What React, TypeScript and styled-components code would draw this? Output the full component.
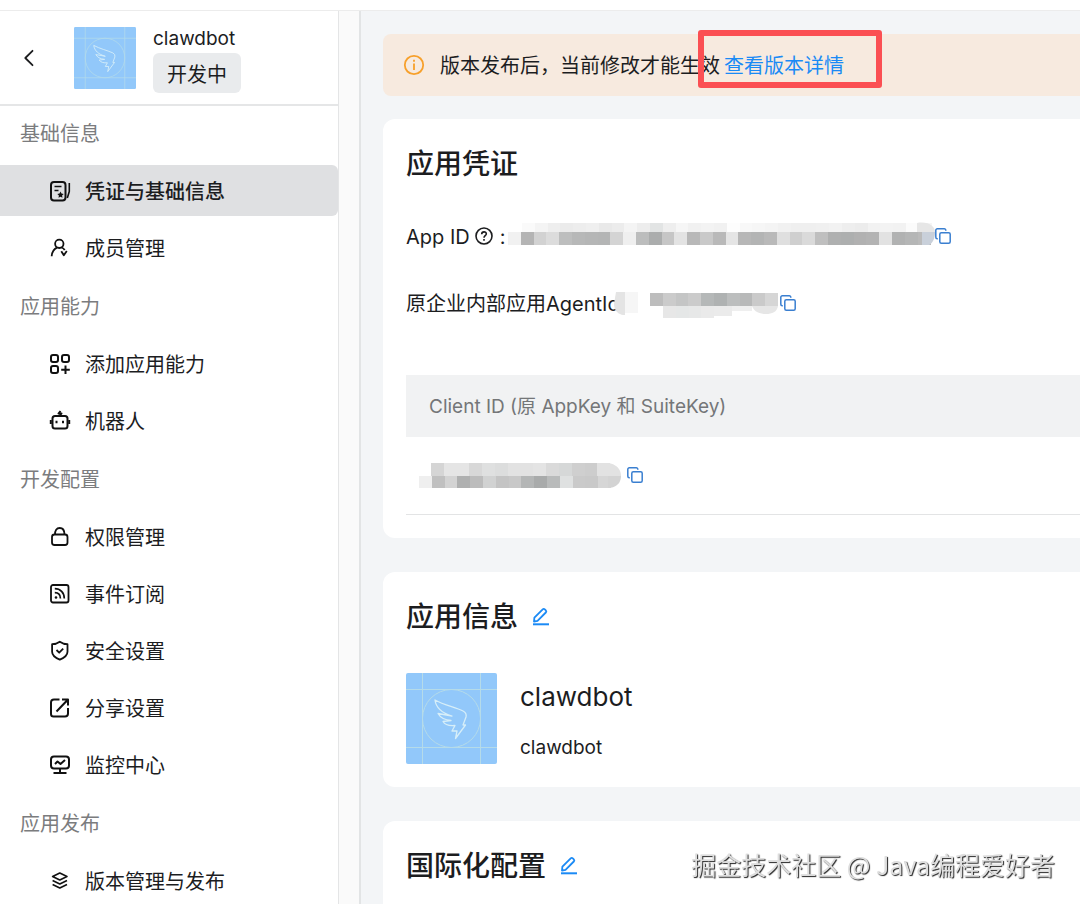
import React from "react";
import styled, { createGlobalStyle } from "styled-components";

const GlobalStyle = createGlobalStyle`
  *, *::before, *::after { box-sizing: border-box; }
  body {
    margin: 0;
    color: #1c1d1f;
    background: #fff;
    font-family: Inter, "Noto Sans CJK SC", sans-serif;
    font-size: 20px;
    line-height: 30px;
  }
  h1, h2, p, ul { margin: 0; padding: 0; font-weight: 400; }
  button { font: inherit; color: inherit; padding: 0; border: 0; background: none; cursor: pointer; }
  svg { display: block; flex: none; }
`;

const Page = styled.div`
  display: flex;
  flex-direction: column;
  height: 100vh;
  overflow: hidden;
`;

const TopBar = styled.header`
  flex: none;
  height: 11px;
  border-bottom: 1px solid #ececec;
`;

const Body = styled.div`
  flex: 1;
  display: flex;
  min-height: 0;
`;

const Sidebar = styled.aside`
  flex: none;
  width: 339px;
  overflow-y: auto;
  scrollbar-width: none;
  border-right: 1px solid #e4e5e6;
`;

const Gutter = styled.div`
  flex: none;
  width: 22px;
  background: #fafafa;
  border-right: 2px solid #e2e4e5;
`;

const AppHeader = styled.div`
  display: flex;
  align-items: center;
  height: 95px;
  padding-left: 18px;
  border-bottom: 2px solid #e5e6e7;
`;

const BackButton = styled.button`
  display: flex;
  margin-right: 34px;
`;

const AppTitle = styled.div`
  display: flex;
  flex-direction: column;
  align-items: flex-start;
  margin-left: 17px;
  padding-top: 2px;
`;

const AppName = styled.h1`
  font-size: 19px;
  line-height: 28px;
`;

const StatusTag = styled.span`
  padding: 7px 14px 3px;
  border-radius: 6px;
  background: #e9ebed;
`;

const NavGroup = styled.section`
  display: flex;
  flex-direction: column;
  gap: 6px;
  padding-bottom: 6px;
`;

const NavLabel = styled.h2`
  padding: 4px 0 0 20px;
  font-size: 20px;
  line-height: 49px;
  color: #7b7c7e;
`;

const NavList = styled.ul`
  display: flex;
  flex-direction: column;
  gap: 6px;
  list-style: none;
`;

const NavLink = styled.a<{ $active?: boolean }>`
  display: flex;
  align-items: center;
  gap: 14px;
  height: 51px;
  padding-left: 49px;
  border-radius: 0 6px 6px 0;
  color: #1c1d1f;
  text-decoration: none;
  font-weight: ${(p) => (p.$active ? 500 : 400)};
  background: ${(p) => (p.$active ? "#dfe0e2" : "transparent")};
`;

const NavText = styled.span`
  padding-top: 2px;
`;

const Main = styled.main`
  flex: 1;
  min-width: 0;
  display: flex;
  flex-direction: column;
  padding: 23px 0 0 22px;
  overflow-y: auto;
  scrollbar-width: none;
  background: #f3f5f7;
`;

const Banner = styled.div`
  flex: none;
  display: flex;
  align-items: center;
  height: 62px;
  margin-bottom: 23px;
  padding-left: 20px;
  border-radius: 8px 0 0 8px;
  background: #f7eadf;
`;

const BannerText = styled.p`
  margin-left: 15px;
  padding-top: 2px;
  white-space: nowrap;
`;

const Highlighted = styled.span`
  position: relative;
  display: inline-block;
  margin-left: 4px;
`;

const HighlightFrame = styled.span`
  position: absolute;
  inset: -21px -38px -7px -26px;
  border: 6px solid #fb4f53;
  border-radius: 3px;
  pointer-events: none;
`;

const TextLink = styled.a`
  color: #1b8af5;
  text-decoration: none;
`;

const Card = styled.section`
  flex: none;
  margin-bottom: 34px;
  padding: 24px 0 23px 23px;
  border-radius: 12px 0 0 12px;
  background: #fff;
`;

const CardHead = styled.div`
  display: flex;
  align-items: center;
  gap: 13px;
  margin-bottom: 35px;
`;

const CardTitle = styled.h2`
  font-size: 28px;
  line-height: 42px;
  font-weight: 500;
`;

const IconButton = styled.button<{ $tone?: string }>`
  display: flex;
  color: ${(p) => p.$tone ?? "#3a7fd0"};
`;

const Fields = styled.div`
  display: flex;
  flex-direction: column;
  gap: 35px;
  margin-bottom: 56px;
`;

const Field = styled.div`
  display: flex;
  align-items: center;
  height: 32px;
`;

const FieldLabel = styled.span`
  padding-top: 2px;
`;

const HelpButton = styled.button`
  display: flex;
  margin: 0 7px 0 5px;
`;

const Redaction = styled.span<{ $before?: number; $after?: number }>`
  margin-left: ${(p) => p.$before ?? 0}px;
  margin-right: ${(p) => p.$after ?? 0}px;
`;

const KeyTable = styled.table`
  width: 100%;
  border-collapse: collapse;
`;

const HeadCell = styled.th`
  height: 62px;
  padding: 2px 23px 0;
  text-align: left;
  font-size: 19px;
  font-weight: 400;
  color: #747678;
  background: #f1f2f3;
`;

const KeyCell = styled.td`
  height: 77px;
  padding: 0 13px;
  border-bottom: 1px solid #e3e4e5;
`;

const KeyValue = styled.div`
  display: flex;
  align-items: center;
`;

const Profile = styled.div`
  display: flex;
  align-items: center;
  gap: 23px;
`;

const ProfileText = styled.div`
  display: flex;
  flex-direction: column;
  gap: 16px;
  padding-top: 2px;
`;

const ProfileName = styled.p`
  font-size: 26px;
  line-height: 42px;
`;

const ProfileNote = styled.p`
  font-size: 19px;
  line-height: 28px;
`;

const Watermark = styled.p`
  position: fixed;
  right: 25px;
  bottom: 22px;
  font-family: "Noto Sans CJK SC", sans-serif;
  font-size: 25px;
  line-height: 36px;
  white-space: nowrap;
  color: #dedede;
  text-shadow: 1px 1px 1px #222;
  pointer-events: none;
`;

function Avatar({ size }: { size: number }) {
  return (
    <svg width={size} height={size} viewBox="0 0 91 91" fill="none" role="img" aria-label="clawdbot">
      <rect width="91" height="91" rx="2" fill="#92c8fa" />
      <g stroke="#b5dbe9" strokeWidth="1">
        <path d="M16.5 0V91M74.5 0V91M0 16.5H91M0 74.5H91" />
        <circle cx="45.5" cy="45.5" r="29" />
      </g>
      <path
        d="M29 27C38 32 48 34 57 38Q61 40 60 44L57 52H59.5L49.5 65.5L51 58H46L49 52.500C44 53 39 52 37 48.500L45 47.500C38 47 34 44 32 40.500L46 43C36 40 30 35 29 27Z"
        stroke="#d6eef8"
        strokeWidth="1.300"
        strokeLinejoin="round"
      />
    </svg>
  );
}

function NavIcon({ children, width = 1.8 }: { children: React.ReactNode; width?: number }) {
  return (
    <svg width="22" height="22" viewBox="0 0 22 22" fill="none" stroke="#111" strokeWidth={width} strokeLinejoin="round" aria-hidden="true">
      {children}
    </svg>
  );
}

const icons = {
  credential: (
    <NavIcon width={2}>
      <rect x="2" y="2" width="14.500" height="18.500" rx="3" />
      <path d="M20.300 3v8.500l-2 6.500" strokeWidth="1.600" />
      <path d="M5.500 6.500h7M5.500 10.500h4" strokeWidth="1.700" />
      <path d="M11.500 11.500l1 2.100 2.200.3-1.600 1.600.4 2.300-2-1.100-2 1.100.4-2.300-1.600-1.600 2.200-.3z" fill="#111" stroke="none" />
    </NavIcon>
  ),
  member: (
    <NavIcon>
      <circle cx="10.300" cy="6.800" r="4.200" />
      <path d="M2.700 19.200C2.900 15.500 4.500 12.300 8 10.600M12.500 10.500q2.300.7 3.200 2.600M12.300 14.300l2.500 4 3-4.300" />
    </NavIcon>
  ),
  addAbility: (
    <NavIcon width={2}>
      <rect x="2" y="2" width="7" height="7" rx="2" />
      <rect x="13" y="2" width="7" height="7" rx="2" />
      <rect x="2" y="13" width="7" height="7" rx="2" />
      <path d="M16.500 12.500v8.500M12.200 16.700h8.600" />
    </NavIcon>
  ),
  robot: (
    <NavIcon width={2}>
      <rect x="3.500" y="6" width="15" height="12.500" rx="2.500" />
      <path d="M1.800 10v4M20.200 10v4M11.500 1l-2 2.500h3l-2 2.500" />
      <path d="M7.500 10.800v2.400M14 10.800v2.400" />
    </NavIcon>
  ),
  lock: (
    <NavIcon>
      <rect x="3" y="8.500" width="15.500" height="10.500" rx="2.500" />
      <path d="M6 8.500C6 4.500 7.500 2 10.700 2S15.500 4.500 15.500 8.500" />
    </NavIcon>
  ),
  feed: (
    <NavIcon>
      <rect x="2" y="2" width="17.500" height="17.500" rx="2" />
      <path d="M5.800 5.700c5.500 0 9.500 4 9.500 9.800M5.800 9.700c3.400 0 5.600 2.300 5.600 5.800" strokeWidth="1.700" />
      <circle cx="7" cy="14.500" r="1.300" fill="#111" stroke="none" />
    </NavIcon>
  ),
  shield: (
    <NavIcon>
      <path d="M10.800 1.700q3.500 2.500 7.700 2.500v7.500c0 3.800-3 6-7.700 8-4.700-2-7.700-4.200-7.700-8V4.200q4.200 0 7.700-2.500z" />
      <path d="M7.500 10l2.700 2.700 4-4" />
    </NavIcon>
  ),
  share: (
    <NavIcon width={2}>
      <path d="M10.500 2.500H5a3 3 0 0 0-3 3V17a2.500 2.500 0 0 0 2.500 2.500H16a3 3 0 0 0 3-3V11M7.500 14.500L18.500 3M13 2.500h6v6" />
    </NavIcon>
  ),
  monitor: (
    <NavIcon width={2}>
      <rect x="2" y="2.500" width="18" height="12" rx="3" />
      <path d="M11 14.500v4.500M4.500 19h13M6 10l2.500-2.500 3 2.500 4.500-4" />
    </NavIcon>
  ),
  layers: (
    <NavIcon width={1.6}>
      <path d="M10.800 3l7.200 3.500-7.200 3.500-7.200-3.500zM3.600 10.500l7.200 3.500 7.200-3.500M3.600 14.500l7.200 3.500 7.200-3.500" />
    </NavIcon>
  ),
};

type NavEntry = { label: string; icon: React.ReactNode; active?: boolean };

const navGroups: { title: string; items: NavEntry[] }[] = [
  {
    title: "基础信息",
    items: [
      { label: "凭证与基础信息", icon: icons.credential, active: true },
      { label: "成员管理", icon: icons.member },
    ],
  },
  {
    title: "应用能力",
    items: [
      { label: "添加应用能力", icon: icons.addAbility },
      { label: "机器人", icon: icons.robot },
    ],
  },
  {
    title: "开发配置",
    items: [
      { label: "权限管理", icon: icons.lock },
      { label: "事件订阅", icon: icons.feed },
      { label: "安全设置", icon: icons.shield },
      { label: "分享设置", icon: icons.share },
      { label: "监控中心", icon: icons.monitor },
    ],
  },
  { title: "应用发布", items: [{ label: "版本管理与发布", icon: icons.layers }] },
];

function CopyIcon() {
  return (
    <svg width="16" height="16" viewBox="0 0 16 16" fill="none" stroke="currentColor" strokeWidth="1.500" aria-hidden="true">
      <path d="M2.800 10.800H2.300A1.500 1.500 0 0 1 .8 9.300V2.300A1.500 1.500 0 0 1 2.300.8h7A1.500 1.500 0 0 1 10.800 2.300v.5" />
      <rect x="4.800" y="4.800" width="10.400" height="10.400" rx="1.500" />
    </svg>
  );
}

function EditIcon() {
  return (
    <svg width="20" height="20" viewBox="0 0 20 20" fill="none" stroke="currentColor" strokeWidth="1.800" strokeLinejoin="round" aria-hidden="true">
      <path d="M3 14.500l.4-3.800 8.300-8.300a1.500 1.500 0 0 1 2.100 0l1 1a1.500 1.500 0 0 1 0 2.100l-8.300 8.300z" />
      <path d="M2 17.300h16" strokeWidth="2" />
    </svg>
  );
}

/* One strip of a pixelated secret: [x, y, width, height, fill]. */
type Cell = [number, number, number, number, string];

const row = (x: number, y: number, h: number, shades: string[]): Cell[] =>
  shades.map((fill, i) => [x + Math.round(i * 12.8), y, 13, h, fill]);

const appIdCells: Cell[] = [
  ...row(14, 1, 10, ["#fafafa", "#f4f4f4", "#eee", "#ebebeb", "#ededed", "#efefef", "#e9e9e9", "#ececec", "#f4f4f4", "#ededed", "#e2e4e4", "#eee", "#f6f6f6", "#f1f1f1", "#f3f3f3", "#f1f1f1", "#fdfdfd", "#f8f8f8", "#f6f6f6", "#f4f4f4", "#f1f1f1", "#efefef", "#efefef", "#f0f0f0", "#f2f2f2", "#eee", "#ececec", "#f2f2f2", "#f3f3f3", "#f2f2f2", "#fbfbfb", "#f6f6f6"]),
  ...row(0, 10, 13, ["#f1f1f1", "#b4b4b4", "#d2d2d2", "#dcdcdc", "#bdbebe", "#b7b8b8", "#b5b6b6", "#b4b5b5", "#d4d4d4", "#efefef", "#bcbdbd", "#abadad", "#c6c6c6", "#e3e3e3", "#b8b8b8", "#c9c9c9", "#b9b9b9", "#e5e5e5", "#b7b7b7", "#b3b4b4", "#b9b9b9", "#dfdfdf", "#cfcfcf", "#dadada", "#bfbfbf", "#afb0b0", "#adafaf", "#b1b1b1", "#b3b3b3", "#e2e2e2", "#b1b2b2", "#b5b6b6", "#bababa"]),
];

const agentCells: Cell[] = [
  [13, 4, 13, 21, "#f6f6f6"],
  ...row(38, 5, 13, ["#bdbdbd", "#cbcbcb", "#c4c5c5", "#cbcbcb", "#b5b8b8", "#afb2b2", "#bcbebe", "#b8b9b9", "#cacaca", "#d6d6d6"]),
  ...row(51, 18, 12, ["#e7e7e7", "#e5e7e7", "#e7e8e8", "#eaeaea"]),
  [102, 18, 18, 10, "#ebebeb"],
  [120, 18, 20, 5, "#efefef"],
];

const clientCells: Cell[] = [
  ...row(12, 0, 13, ["#d5d5d5", "#e5e5e5", "#e5e5e5", "#d8d8d8", "#dfe0e0", "#dcdddd", "#e2e2e2", "#e2e2e2", "#e4e4e4", "#dadada", "#d6d8d8", "#cfcfcf", "#cdcdcd", "#e2e2e2"]),
  ...row(0, 13, 12, ["#efefef", "#c0c0c0", "#d3d3d3", "#afb0b0", "#bcbcbc", "#d1d2d2", "#c4c4c4", "#c8c8c8", "#b4b6b6", "#a9abab", "#b9bbbb", "#dfe1e1", "#cacaca", "#c9c9c9", "#d6d6d6"]),
];

function Mosaic({ cells, width, height, cap }: { cells: Cell[]; width: number; height: number; cap: React.ReactNode }) {
  return (
    <svg width={width} height={height} viewBox={`0 0 ${width} ${height}`} shapeRendering="crispEdges" aria-hidden="true">
      {cells.map(([x, y, w, h, fill], i) => (
        <rect key={i} x={x} y={y} width={w} height={h} fill={fill} />
      ))}
      <g shapeRendering="auto">{cap}</g>
    </svg>
  );
}

export default function App() {
  return (
    <Page>
      <GlobalStyle />
      <TopBar />
      <Body>
        <Sidebar>
          <AppHeader>
            <BackButton aria-label="返回">
              <svg width="22" height="22" viewBox="0 0 22 22" fill="none" stroke="#1c1d1f" strokeWidth="1.800" strokeLinecap="round" strokeLinejoin="round">
                <path d="M14.500 3.800L7.300 11l7.200 7.200" />
              </svg>
            </BackButton>
            <Avatar size={62} />
            <AppTitle>
              <AppName>clawdbot</AppName>
              <StatusTag>开发中</StatusTag>
            </AppTitle>
          </AppHeader>
          <nav>
            {navGroups.map((group) => (
              <NavGroup key={group.title}>
                <NavLabel>{group.title}</NavLabel>
                <NavList>
                  {group.items.map((item) => (
                    <li key={item.label}>
                      <NavLink href="#" $active={item.active} aria-current={item.active ? "page" : undefined}>
                        {item.icon}
                        <NavText>{item.label}</NavText>
                      </NavLink>
                    </li>
                  ))}
                </NavList>
              </NavGroup>
            ))}
          </nav>
        </Sidebar>
        <Gutter />
        <Main>
          <Banner>
            <svg width="22" height="22" viewBox="0 0 22 22" fill="none" stroke="#f7a02b" strokeWidth="1.800" aria-hidden="true">
              <circle cx="11" cy="11" r="9.200" />
              <path d="M11 9.500v6.500M11 5.800v2" />
            </svg>
            <BannerText>
              版本发布后，当前修改才能生效
              <Highlighted>
                <TextLink href="#">查看版本详情</TextLink>
                <HighlightFrame />
              </Highlighted>
            </BannerText>
          </Banner>

          <Card>
            <CardHead>
              <CardTitle>应用凭证</CardTitle>
            </CardHead>
            <Fields>
              <Field>
                <FieldLabel>App ID</FieldLabel>
                <HelpButton aria-label="帮助">
                  <svg width="18" height="18" viewBox="0 0 18 18" fill="none" stroke="#1c1d1f" strokeWidth="1.600" aria-hidden="true">
                    <circle cx="9" cy="9" r="8" />
                    <path d="M6.700 7.200C6.700 4 11.500 4.200 11.300 7c-.1 1.600-2.300 1.700-2.300 3.700M9 12v1.700" />
                  </svg>
                </HelpButton>
                <FieldLabel>:</FieldLabel>
                <Redaction $before={2}>
                  <Mosaic
                    cells={appIdCells}
                    width={427}
                    height={28}
                    cap={
                      <>
                        <path d="M409 1c12-2 18 4 18 9h-18z" fill="#e6e6e6" />
                        <path d="M414 10h13c0 6-2 11-6 13h-7z" fill="#c9d0da" />
                      </>
                    }
                  />
                </Redaction>
                <IconButton aria-label="复制 App ID">
                  <CopyIcon />
                </IconButton>
              </Field>
              <Field>
                <FieldLabel>原企业内部应用AgentId</FieldLabel>
                <Redaction $before={-8} $after={2}>
                  <Mosaic
                    cells={agentCells}
                    width={166}
                    height={30}
                    cap={
                      <>
                        <path d="M4 4h9v23c-7 0-11-5-11-11z" fill="#e4e4e4" />
                        <path d="M140 18h26c-1 6-6 8-12 8s-12-2-14-8z" fill="#e6e6e6" />
                      </>
                    }
                  />
                </Redaction>
                <IconButton aria-label="复制 AgentId">
                  <CopyIcon />
                </IconButton>
              </Field>
            </Fields>
            <KeyTable>
              <thead>
                <tr>
                  <HeadCell scope="col">Client ID (原 AppKey 和 SuiteKey)</HeadCell>
                </tr>
              </thead>
              <tbody>
                <tr>
                  <KeyCell>
                    <KeyValue>
                      <Redaction $after={6}>
                        <Mosaic
                          cells={clientCells}
                          width={202}
                          height={25}
                          cap={
                            <>
                              <path d="M189 0c8 1 13 6 13 13h-13z" fill="#e2e2e2" />
                              <path d="M189 13h13c0 7-5 12-13 12z" fill="#d3d3d3" />
                            </>
                          }
                        />
                      </Redaction>
                      <IconButton aria-label="复制 Client ID">
                        <CopyIcon />
                      </IconButton>
                    </KeyValue>
                  </KeyCell>
                </tr>
              </tbody>
            </KeyTable>
          </Card>

          <Card>
            <CardHead>
              <CardTitle>应用信息</CardTitle>
              <IconButton $tone="#1b8af5" aria-label="编辑应用信息">
                <EditIcon />
              </IconButton>
            </CardHead>
            <Profile>
              <Avatar size={91} />
              <ProfileText>
                <ProfileName>clawdbot</ProfileName>
                <ProfileNote>clawdbot</ProfileNote>
              </ProfileText>
            </Profile>
          </Card>

          <Card>
            <CardHead>
              <CardTitle>国际化配置</CardTitle>
              <IconButton $tone="#1b8af5" aria-label="编辑国际化配置">
                <EditIcon />
              </IconButton>
            </CardHead>
          </Card>
        </Main>
      </Body>
      <Watermark>掘金技术社区 @ Java编程爱好者</Watermark>
    </Page>
  );
}
